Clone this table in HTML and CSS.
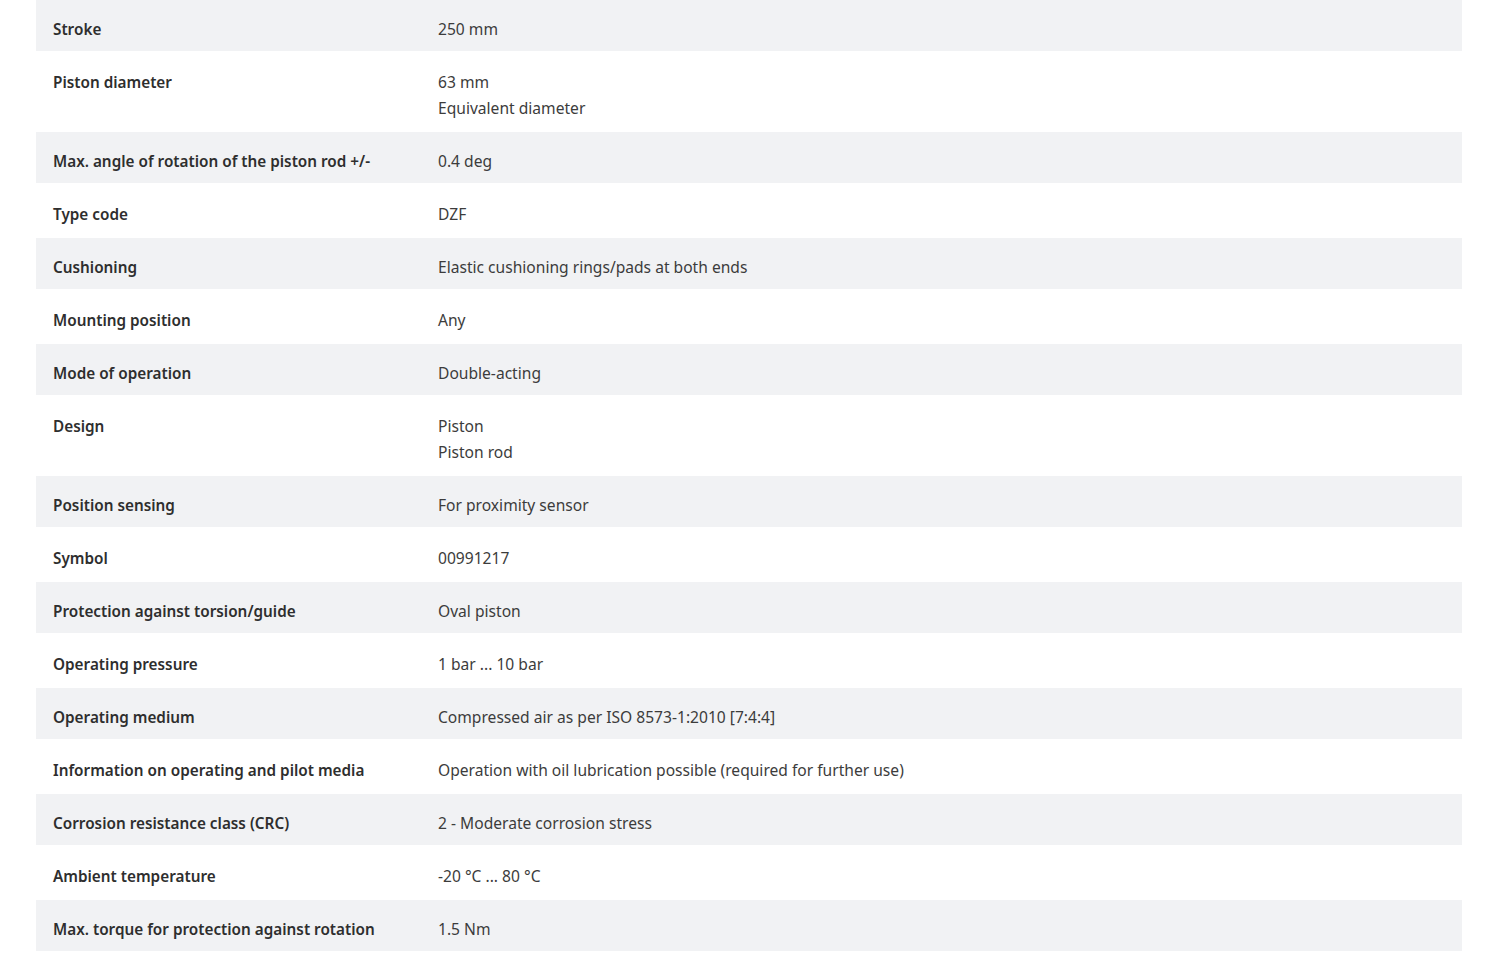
FILE: index.html
```html
<!DOCTYPE html>
<html lang="en">
<head>
<meta charset="utf-8">
<title>Technical data</title>
<link rel="stylesheet" href="styles.css">
</head>
<body>
<div class="specs">
  <div class="row"><div class="label">Stroke</div><div class="value">250 mm</div></div>
  <div class="row"><div class="label">Piston diameter</div><div class="value">63 mm<br>Equivalent diameter</div></div>
  <div class="row"><div class="label">Max. angle of rotation of the piston rod +/-</div><div class="value">0.4 deg</div></div>
  <div class="row"><div class="label">Type code</div><div class="value">DZF</div></div>
  <div class="row"><div class="label">Cushioning</div><div class="value">Elastic cushioning rings/pads at both ends</div></div>
  <div class="row"><div class="label">Mounting position</div><div class="value">Any</div></div>
  <div class="row"><div class="label">Mode of operation</div><div class="value">Double-acting</div></div>
  <div class="row"><div class="label">Design</div><div class="value">Piston<br>Piston rod</div></div>
  <div class="row"><div class="label">Position sensing</div><div class="value">For proximity sensor</div></div>
  <div class="row"><div class="label">Symbol</div><div class="value">00991217</div></div>
  <div class="row"><div class="label">Protection against torsion/guide</div><div class="value">Oval piston</div></div>
  <div class="row"><div class="label">Operating pressure</div><div class="value">1 bar ... 10 bar</div></div>
  <div class="row"><div class="label">Operating medium</div><div class="value">Compressed air as per ISO 8573-1:2010 [7:4:4]</div></div>
  <div class="row"><div class="label">Information on operating and pilot media</div><div class="value">Operation with oil lubrication possible (required for further use)</div></div>
  <div class="row"><div class="label">Corrosion resistance class (CRC)</div><div class="value">2 - Moderate corrosion stress</div></div>
  <div class="row"><div class="label">Ambient temperature</div><div class="value">-20 °C ... 80 °C</div></div>
  <div class="row"><div class="label">Max. torque for protection against rotation</div><div class="value">1.5 Nm</div></div>
</div>
</body>
</html>
```

FILE: styles.css
```css
html, body {
  margin: 0;
  padding: 0;
  background: #ffffff;
}
body {
  font-family: "Noto Sans", "Open Sans", sans-serif;
  font-size: 15px;
  color: #333333;
}
.specs {
  margin: 0 38px 0 36px;
  display: flex;
  flex-direction: column;
}
.row {
  display: grid;
  grid-template-columns: 385px 1fr;
  align-items: baseline;
  border-bottom: 2px solid #ffffff;
  padding: 16px 0 9px;
  line-height: 26px;
}
.row:nth-child(odd) {
  background: #f1f2f4;
}
.label {
  font-weight: 600;
  font-size: 15.3px;
  padding-left: 17px;
  color: #2e2e2e;
}
.value {
  padding-left: 17px;
  font-size: 15.6px;
  color: #3c3c3c;
}
```
